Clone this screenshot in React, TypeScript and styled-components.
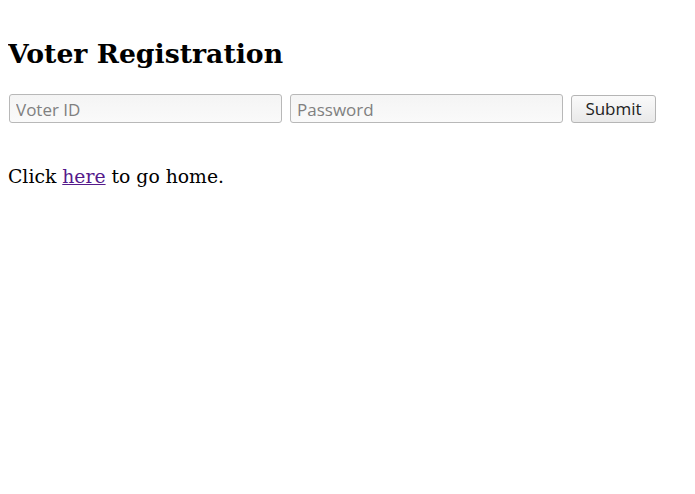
import React from 'react';
import styled, { createGlobalStyle } from 'styled-components';

const GlobalStyle = createGlobalStyle`
    body {
        margin: 8px;
        font-family: "DejaVu Serif", serif;
        font-size: 18.8px;
        color: #000;
        background: #fff;
    }
`;

const Title = styled.h2`
    font-size: 26.7px;
    font-weight: bold;
    margin: 30px 0 0;
`;

const Form = styled.form`
    display: flex;
    align-items: center;
    gap: 8px;
    margin: 25px 0 0 1px;
`;

const Field = styled.input`
    width: 273px;
    height: 29px;
    box-sizing: border-box;
    padding: 1px 6px 0;
    border: 1px solid #b8b8b8;
    border-radius: 3px;
    background: linear-gradient(#f4f4f4, #fafafa);
    font-family: "Open Sans", "DejaVu Sans", sans-serif;
    font-size: 17px;
    color: #333;
    &::placeholder {
        color: #808080;
    }
`;

const SubmitButton = styled.button`
    width: 85px;
    height: 28px;
    box-sizing: border-box;
    border: 1px solid #b5b5b5;
    border-radius: 3px;
    background: linear-gradient(#fafafa, #e9e9e9);
    font-family: "Open Sans", "DejaVu Sans", sans-serif;
    font-size: 17px;
    color: #222;
`;

const Note = styled.p`
    margin: 43px 0 0;
`;

const HomeLink = styled.a`
    color: #551a8b;
`;

const App = () => (
    <>
        <GlobalStyle />
        <Title>Voter Registration</Title>
        <Form onSubmit={(e) => e.preventDefault()}>
            <Field type="text" placeholder="Voter ID" />
            <Field type="password" placeholder="Password" />
            <SubmitButton type="submit">Submit</SubmitButton>
        </Form>
        <Note>
            Click <HomeLink href="#">here</HomeLink> to go home.
        </Note>
    </>
);

export default App;
